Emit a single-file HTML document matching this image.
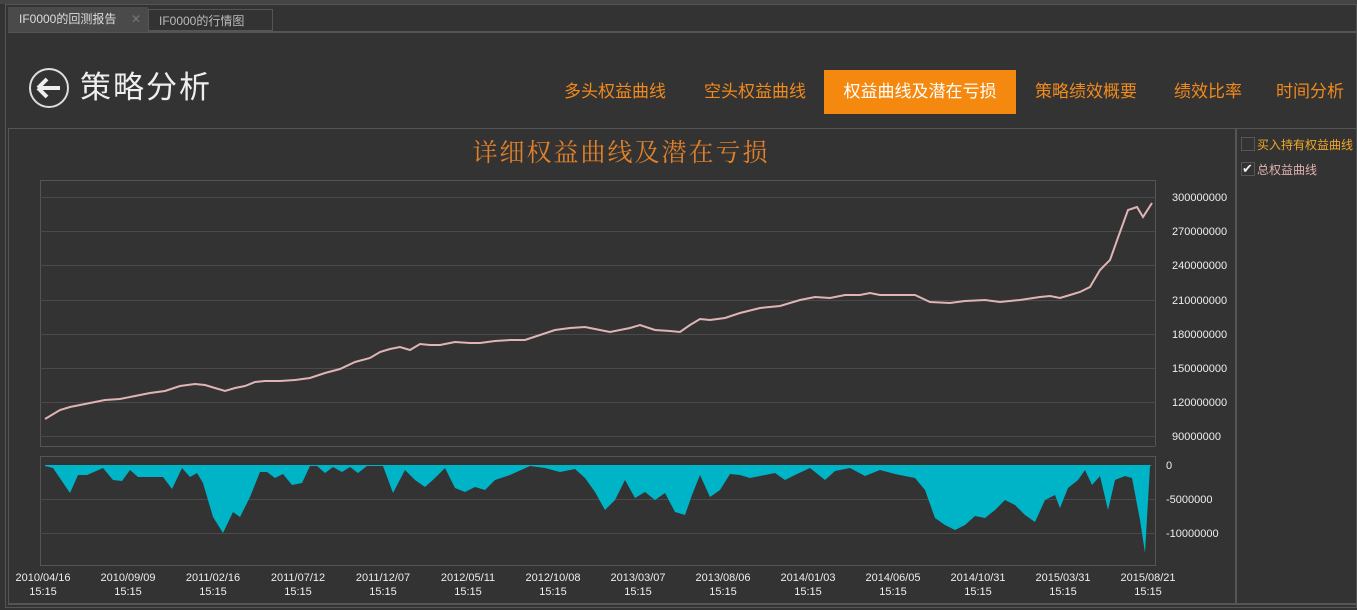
<!DOCTYPE html><html><head><meta charset="utf-8"><style>
body{margin:0;width:1357px;height:610px;background:#333;overflow:hidden;font-family:"Liberation Sans","Noto Sans CJK SC",sans-serif;position:relative}
.a{position:absolute}
.nav{position:absolute;top:70px;height:44px;line-height:44px;color:#f08a1c;font-size:17px;text-align:center}
</style></head><body>
<div class="a" style="left:0;top:0;width:1357px;height:4px;background:#444"></div>
<div class="a" style="left:5px;top:4px;width:1352px;height:604px;border:1px solid #555;box-sizing:border-box"></div>
<div class="a" style="left:8px;top:31px;width:1349px;height:2px;background:#555"></div>
<div class="a" style="left:8px;top:7px;width:140px;height:25px;background:#4a4a4a;color:#ddd;font-size:12px;line-height:25px;text-indent:11px">IF0000的回测报告<span style="position:absolute;left:123px;color:#777;text-indent:0">✕</span></div>
<div class="a" style="left:148px;top:9px;width:125px;height:22px;border:1px solid #555;box-sizing:border-box;color:#bbb;font-size:12px;line-height:22px;text-indent:10px">IF0000的行情图</div>
<svg class="a" style="left:28px;top:67px" width="42" height="42"><circle cx="21" cy="21" r="19" fill="none" stroke="#ddd" stroke-width="2"/><path d="M10 21H32M10 21L19 12M10 21L19 30" stroke="#eee" stroke-width="4" fill="none"/></svg>
<div class="a" style="left:80px;top:68px;color:#eee;font-size:31px;line-height:40px;letter-spacing:2px">策略分析</div>
<div class="nav" style="left:552px;width:126px">多头权益曲线</div>
<div class="nav" style="left:692px;width:126px">空头权益曲线</div>
<div class="nav" style="left:824px;width:192px;background:#f5890f;color:#fff">权益曲线及潜在亏损</div>
<div class="nav" style="left:1024px;width:124px">策略绩效概要</div>
<div class="nav" style="left:1160px;width:96px">绩效比率</div>
<div class="nav" style="left:1266px;width:88px">时间分析</div>
<div class="a" style="left:8px;top:128px;width:1349px;height:1px;background:#555"></div>
<div class="a" style="left:8px;top:128px;width:1px;height:476px;background:#555"></div>
<div class="a" style="left:1235px;top:128px;width:2px;height:476px;background:#555"></div>
<div class="a" style="left:8px;top:603px;width:1349px;height:2px;background:#555"></div>
<div class="a" style="left:300px;top:133px;width:642px;text-align:center;color:#e0802a;font-size:25px;letter-spacing:2px;font-family:'Noto Serif CJK SC',serif">详细权益曲线及潜在亏损</div>
<div class="a" style="left:1241px;top:137px;width:12px;height:12px;border:1px solid #555"></div>
<div class="a" style="left:1257px;top:136px;color:#f0a828;font-size:12px">买入持有权益曲线</div>
<div class="a" style="left:1241px;top:162px;width:12px;height:12px;border:1px solid #555;color:#eee;font-size:13px;line-height:12px">✔</div>
<div class="a" style="left:1257px;top:161px;color:#e0b0b0;font-size:12px">总权益曲线</div>
<svg class="a" style="left:0;top:0" width="1235" height="603" font-family="Liberation Sans" font-size="11" fill="#eee">
<g stroke="#555" stroke-width="1">
<path d="M40.5 180V446M40.5 456V566M1155.5 180V446M1155.5 456V566M40 180.5H1155M40 446.5H1155M40 456.5H1155M40 565.5H1155"/>
<path d="M40 197.5H1155M40 231.5H1155M40 265.5H1155M40 300.5H1155M40 334.5H1155M40 368.5H1155M40 402.5H1155M40 436.5H1155M40 499.5H1155M40 533.5H1155" stroke="#4a4a4a"/>
</g>
<path d="M45 466L53 468L70 493L78 475L87 475L103 468L113 480L122 481L130 470L138 477L163 477L172 489L182 468L190 477L197 473L203 483L213 517L223 533L233 512L240 517L250 497L260 472L267 472L275 478L283 474L292 485L302 483L310 466L317 466L325 473L333 467L342 472L350 467L358 473L367 466L383 466L393 493L405 470L415 480L425 487L435 478L445 468L455 488L465 492L475 487L485 490L495 480L510 475L530 466L545 468L560 472L575 469L585 478L595 492L605 510L615 500L625 480L635 498L645 492L655 500L665 493L675 512L685 515L692 495L700 475L710 497L720 490L730 474L740 475L750 478L760 476L775 473L785 480L795 475L810 468L825 480L835 471L850 468L865 476L880 470L895 474L915 478L925 490L935 518L945 525L955 530L965 525L975 516L985 518L995 510L1005 500L1015 505L1025 515L1035 522L1045 500L1055 495L1060 508L1068 488L1078 480L1085 470L1092 485L1100 476L1108 510L1115 480L1125 476L1132 478L1140 520L1145 553L1150 466L1152 465L45 465Z" fill="#00b4c8"/>
<polyline fill="none" stroke="#e0b4b4" stroke-width="2" points="45,419 60,410 70,407 80,405 95,402 105,400 120,399 135,396 150,393 165,391 180,386 195,384 205,385 215,388 225,391 235,388 245,386 255,382 265,381 280,381 295,380 310,378 325,373 340,369 355,362 370,358 380,352 390,349 400,347 410,350 420,344 430,345 440,345 455,342 470,343 480,343 495,341 510,340 525,340 540,335 555,330 570,328 585,327 600,330 610,332 620,330 630,328 640,325 655,330 670,331 680,332 690,325 700,319 710,320 725,318 740,313 760,308 780,306 800,300 815,297 830,298 845,295 860,295 870,293 880,295 900,295 915,295 930,302 950,303 965,301 985,300 1000,302 1020,300 1040,297 1050,296 1060,298 1070,295 1080,292 1090,287 1100,270 1110,260 1120,232 1128,210 1137,207 1143,217 1152,203"/>
<g text-anchor="start">
<text x="1172" y="201">300000000</text><text x="1172" y="235">270000000</text><text x="1172" y="269">240000000</text><text x="1172" y="304">210000000</text><text x="1172" y="338">180000000</text><text x="1172" y="372">150000000</text><text x="1172" y="406">120000000</text><text x="1172" y="440">90000000</text>
<text x="1166" y="469">0</text><text x="1166" y="503">-5000000</text><text x="1166" y="537">-10000000</text>
</g>
<g text-anchor="middle">
<text x="43" y="581">2010/04/16</text><text x="43" y="595">15:15</text>
<text x="128" y="581">2010/09/09</text><text x="128" y="595">15:15</text>
<text x="213" y="581">2011/02/16</text><text x="213" y="595">15:15</text>
<text x="298" y="581">2011/07/12</text><text x="298" y="595">15:15</text>
<text x="383" y="581">2011/12/07</text><text x="383" y="595">15:15</text>
<text x="468" y="581">2012/05/11</text><text x="468" y="595">15:15</text>
<text x="553" y="581">2012/10/08</text><text x="553" y="595">15:15</text>
<text x="638" y="581">2013/03/07</text><text x="638" y="595">15:15</text>
<text x="723" y="581">2013/08/06</text><text x="723" y="595">15:15</text>
<text x="808" y="581">2014/01/03</text><text x="808" y="595">15:15</text>
<text x="893" y="581">2014/06/05</text><text x="893" y="595">15:15</text>
<text x="978" y="581">2014/10/31</text><text x="978" y="595">15:15</text>
<text x="1063" y="581">2015/03/31</text><text x="1063" y="595">15:15</text>
<text x="1148" y="581">2015/08/21</text><text x="1148" y="595">15:15</text>
</g>
</svg>
</body></html>
